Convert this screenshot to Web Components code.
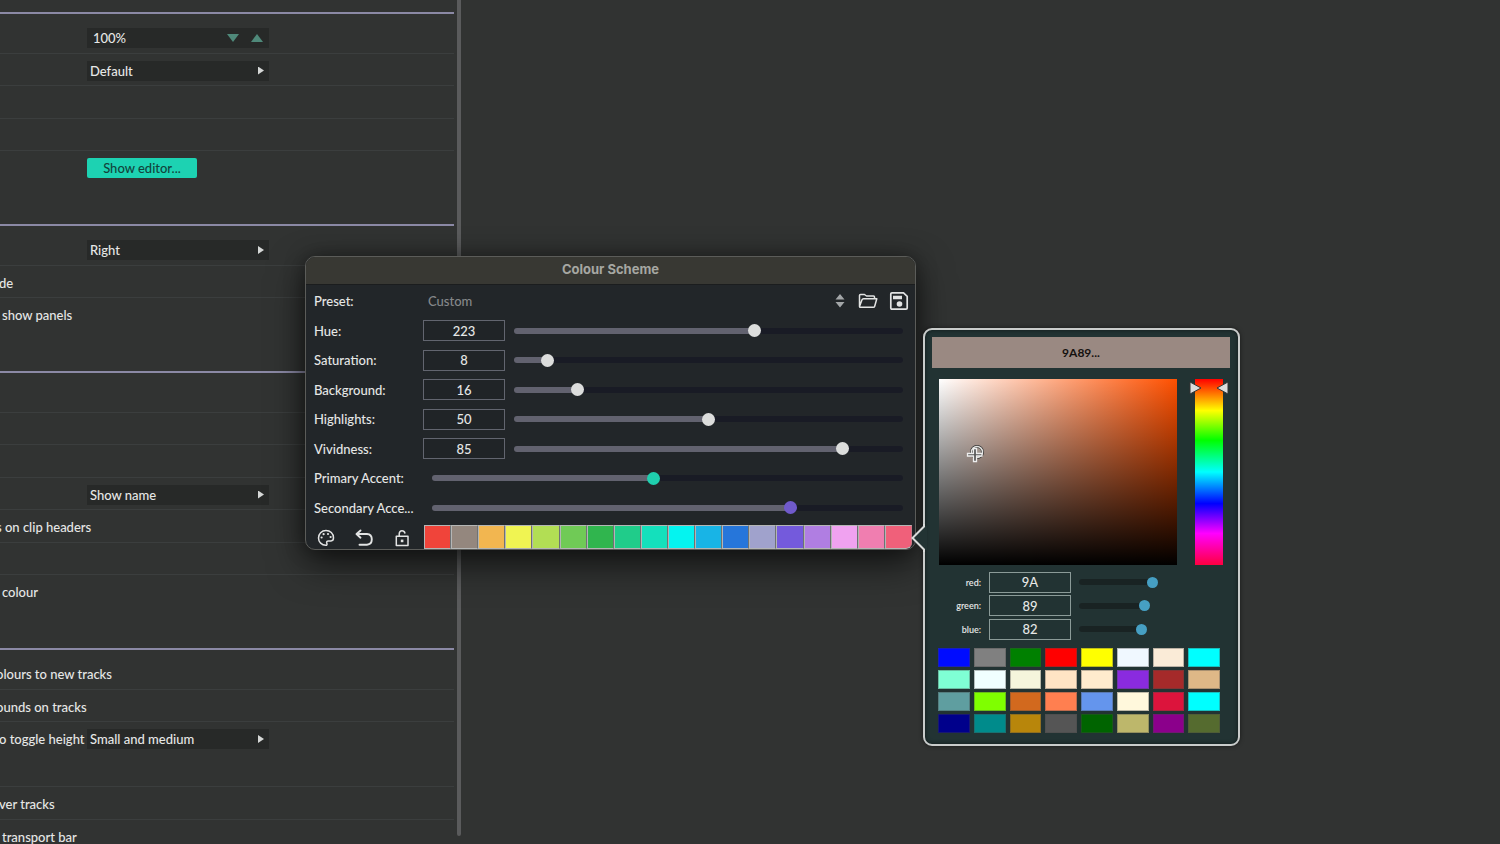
<!DOCTYPE html>
<html lang="en">
<head>
<meta charset="utf-8">
<meta name="viewport" content="width=device-width, initial-scale=1">
<title>Colour Scheme</title>
<style>
  body {
    margin: 0;
    background: #313332;
    color: #e6e7e6;
    font-family: Lato, "Open Sans", sans-serif;
    font-size: 13px;
    font-weight: 500;
  }
</style>
</head>
<body>
<daw-workspace>
  <settings-panel>
    <settings-section>
      <settings-row kind="stepper" value="100%" name="Zoom"></settings-row>
      <settings-row kind="select" value="Default" name="Font"></settings-row>
      <settings-row></settings-row>
      <settings-row></settings-row>
      <settings-row kind="button" value="Show editor..." plain></settings-row>
      <settings-row plain></settings-row>
    </settings-section>
    <settings-section>
      <settings-row kind="select" value="Right" name="Side"></settings-row>
      <settings-row cut label="de"></settings-row>
      <settings-row label="show panels" plain></settings-row>
      <settings-row plain></settings-row>
    </settings-section>
    <settings-section>
      <settings-row></settings-row>
      <settings-row></settings-row>
      <settings-row></settings-row>
      <settings-row kind="select" value="Show name" name="Clip header"></settings-row>
      <settings-row cut="deep" label="s on clip headers"></settings-row>
      <settings-row></settings-row>
      <settings-row label="colour" plain></settings-row>
      <settings-row plain></settings-row>
    </settings-section>
    <settings-section>
      <settings-row cut="deep" label="olours to new tracks"></settings-row>
      <settings-row cut="deep" label="ounds on tracks"></settings-row>
      <settings-row cut label="o toggle height" kind="select" value="Small and medium" plain></settings-row>
      <settings-row></settings-row>
      <settings-row cut label="ver tracks"></settings-row>
      <settings-row label="transport bar" plain></settings-row>
    </settings-section>
  </settings-panel>

  <tool-window slot="window" heading="Colour Scheme">
    <preset-row></preset-row>
    <slider-row label="Hue:" value="223" max="360"></slider-row>
    <slider-row label="Saturation:" value="8" max="100"></slider-row>
    <slider-row label="Background:" value="16" max="100"></slider-row>
    <slider-row label="Highlights:" value="50" max="100"></slider-row>
    <slider-row label="Vividness:" value="85" max="100"></slider-row>
    <slider-row label="Primary Accent:" value="94" max="200" accent="#1fcfae"></slider-row>
    <slider-row label="Secondary Acce..." value="153" max="200" accent="#705acb"></slider-row>
    <palette-bar slot="footer"></palette-bar>
  </tool-window>

  <colour-picker slot="popover"></colour-picker>
</daw-workspace>

<script>
function template(html) {
  const t = document.createElement('template');
  t.innerHTML = html;
  return t;
}

class BaseElement extends HTMLElement {
  constructor() {
    super();
    this.attachShadow({mode: 'open'});
  }
  render(html) {
    this.shadowRoot.appendChild(template(html).content.cloneNode(true));
  }
}

class DawWorkspace extends BaseElement {
  connectedCallback() {
    this.render(`
      <style>
        :host { display: flex; position: relative; height: 100vh; overflow: hidden; }
        .scroll { width: 4px; margin: 0 0 8px 3px; background: #5a5b5c; border-radius: 0 0 2px 2px; }
        ::slotted(tool-window) { position: absolute; left: 305px; top: 256px; }
        ::slotted(colour-picker) { position: absolute; left: 923px; top: 328px; }
      </style>
      <slot></slot>
      <div class="scroll"></div>
      <slot name="window"></slot>
      <slot name="popover"></slot>
    `);
  }
}

class SettingsPanel extends BaseElement {
  connectedCallback() {
    this.render(`
      <style>
        :host { display: block; width: 454px; padding-top: 12px; overflow: hidden; }
      </style>
      <slot></slot>
    `);
  }
}

class SettingsSection extends BaseElement {
  connectedCallback() {
    this.render(`
      <style>
        :host { display: block; border-top: 2px solid #8b89a5; padding: 7px 0 8px; }
        ::slotted(:nth-child(odd)) { height: 33px; }
        ::slotted(:nth-child(even)) { height: 32px; }
      </style>
      <slot></slot>
    `);
  }
}

class SettingsRow extends BaseElement {
  connectedCallback() {
    const label = this.getAttribute('label') || '';
    const value = this.getAttribute('value');
    const name = this.getAttribute('name');
    const aria = name ? `aria-label="${name}"` : '';
    const controls = {
      select: `<span class="box"><select id="control" ${aria}><option>${value}</option></select><i class="arrow"></i></span>`,
      stepper: `<span class="box step"><input id="control" ${aria} value="${value}">
        <button aria-label="Decrease"><svg width="12" height="8"><path d="M0 0h12l-6 8z"/></svg></button>
        <button aria-label="Increase"><svg width="12" height="8"><path d="M0 8h12l-6-8z"/></svg></button></span>`,
      button: `<button class="action" id="control">${value}</button>`
    };
    const kind = this.getAttribute('kind');
    this.render(`
      <style>
        :host {
          display: grid;
          grid-template-columns: 85px 182px;
          align-items: center;
          box-sizing: border-box;
          padding: 2px 0 0 2px;
          border-bottom: 1px solid #3b3e3e;
        }
        :host([plain]) { border-color: transparent; }
        :host([cut]) { --shift: -3px; }
        :host([cut=deep]) { --shift: -6px; }
        .label, label { margin-left: var(--shift, 0); white-space: nowrap; line-height: 20px; }
        .box { display: grid; grid-template-columns: 1fr 16px; align-items: center; grid-column: 2; height: 20px; background: #272928; }
        select, input {
          appearance: none;
          width: 100%;
          height: 20px;
          margin: 0;
          padding: 0 3px;
          border: 0;
          background: none;
          color: inherit;
          font: inherit;
          outline: none;
        }
        select { grid-area: 1 / 1 / 2 / 3; }
        .arrow { grid-area: 1 / 2; width: 6px; height: 8px; background: #d6d8d7; clip-path: polygon(0 0, 100% 50%, 0 100%); pointer-events: none; margin-left: 5px; }
        .step { grid-template-columns: 1fr 12px 12px; column-gap: 12px; padding-right: 6px; box-sizing: border-box; }
        .step input { padding-left: 6px; }
        .step button { border: 0; padding: 0; background: none; display: flex; }
        .step svg { fill: #4f897a; }
        .action {
          grid-column: 2;
          justify-self: start;
          width: 110px;
          height: 20px;
          padding: 0;
          border: 0;
          border-radius: 2px;
          background: #1dd2b2;
          color: #12443c;
          font: inherit;
        }
      </style>
      ${kind === 'select' && label ? `<label for="control">${label}</label>` : `<span class="label">${label}</span>`}
      ${controls[kind] || ''}
    `);
  }
}

class ToolWindow extends BaseElement {
  connectedCallback() {
    this.render(`
      <style>
        :host {
          display: block;
          box-sizing: border-box;
          width: 611px;
          border: 1px solid #5b5c59;
          border-radius: 10px;
          overflow: hidden;
          background: #222629;
          box-shadow: 0 14px 36px rgba(0, 0, 0, .6), 0 0 20px rgba(0, 0, 0, .35);
        }
        h1 {
          margin: 0;
          height: 27px;
          border-bottom: 1px solid #1b1d1e;
          background: #383833;
          color: #a6a7a2;
          font: 700 13px/25px Inter, sans-serif;
          text-align: center;
        }
        main { padding: 1px 12px 3px 8px; }
        ::slotted(:nth-child(odd)) { height: 30px; }
        ::slotted(:nth-child(even)) { height: 29px; }
        ::slotted([slot]) { height: 24px; }
      </style>
      <h1>${this.getAttribute('heading')}</h1>
      <main><slot></slot></main>
      <slot name="footer"></slot>
    `);
  }
}

class PresetRow extends BaseElement {
  connectedCallback() {
    this.render(`
      <style>
        :host { display: grid; grid-template-columns: 109px 1fr auto auto; align-items: center; }
        .pick { display: grid; align-items: center; }
        select { grid-area: 1 / 1; appearance: none; width: 100%; height: 22px; border: 0; background: none; padding: 0 5px; color: #85888a; font: inherit; }
        .pick svg { grid-area: 1 / 1; justify-self: end; margin-right: 5px; fill: #a3a6a8; pointer-events: none; }
        button { display: flex; border: 0; padding: 0; background: none; margin-left: 8px; color: #e2e3e3; }
        button + button { margin: 0 -6px 0 11px; }
      </style>
      <label for="preset">Preset:</label>
      <span class="pick">
        <select id="preset"><option>Custom</option></select>
        <svg width="10" height="14" viewBox="0 0 10 14"><path d="M5 0l4.500 5.500h-9zM5 13.500l4.500-5.500h-9z"/></svg>
      </span>
      <button aria-label="Open preset">
        <svg width="20" height="16" viewBox="0 0 20 16" fill="none" stroke="currentColor" stroke-width="1.500" stroke-linejoin="round"><path d="M1.500 13.500V2.500Q1.500 1.500 2.500 1.500H6.500L8.500 3H15.500Q16.500 3 16.500 4V5.500M1.500 13.500L4 6.800Q4.400 5.700 5.500 5.700H18.800L16.700 13.200Q16.400 14.300 15.300 14.300H2.300Q1.500 14.300 1.500 13.500Z"/></svg>
      </button>
      <button aria-label="Save preset">
        <svg width="20" height="20" viewBox="0 0 20 20" fill="none" stroke="currentColor" stroke-width="1.700" stroke-linejoin="round"><path d="M3 1.800H14.500L18.200 5.300V17Q18.200 18.200 17 18.200H3Q1.800 18.200 1.800 17V3Q1.800 1.800 3 1.800Z"/><path d="M4 6.500H13" stroke-width="3.600"/><circle cx="10.500" cy="13" r="2.800" fill="currentColor" stroke="none"/></svg>
      </button>
    `);
  }
}

// range input drawn over a rounded bar; both share one grid cell
const rangeStyles = `
  .range { display: grid; align-items: center; }
  .bar { grid-area: 1 / 1; height: 6px; margin: 0 4px; border-radius: 3px;
    background: linear-gradient(to right, var(--fill) var(--pos), var(--track) var(--pos)); }
  .range input { grid-area: 1 / 1; appearance: none; width: 100%; height: 14px; margin: 0; background: none; }
  .range input::-webkit-slider-thumb { appearance: none; width: var(--thumb-size); height: var(--thumb-size); border: 0; border-radius: 50%; background: var(--thumb); }
  .range input::-moz-range-thumb { width: var(--thumb-size); height: var(--thumb-size); border: 0; border-radius: 50%; background: var(--thumb); }
`;

class SliderRow extends BaseElement {
  connectedCallback() {
    const label = this.getAttribute('label');
    const value = this.getAttribute('value');
    const max = this.getAttribute('max');
    const accent = this.getAttribute('accent');
    this.render(`
      <style>
        :host {
          display: grid;
          grid-template-columns: 109px ${accent ? '' : '82px '}1fr;
          align-items: center;
          --fill: #62626f;
          --track: #191b25;
          --thumb: ${accent || '#dcdddc'};
          --thumb-size: 13px;
          --pos: ${100 * value / max}%;
        }
        label { white-space: nowrap; }
        .number { box-sizing: border-box; width: 82px; height: 21px; padding: 0; border: 1px solid #62656f; background: #202427; color: inherit; font: inherit; text-align: center; }
        .range { margin: 0 -4px 0 5px; }
        ${rangeStyles}
      </style>
      <label for="value">${label}</label>
      ${accent ? '' : `<input class="number" id="value" value="${value}">`}
      <span class="range"><span class="bar"></span><input type="range" ${accent ? 'id="value"' : `aria-label="${label}"`} min="0" max="${max}" value="${value}"></span>
    `);
  }
}

class PaletteBar extends BaseElement {
  connectedCallback() {
    const colours = ['#f0443a', '#94877e', '#f2b650', '#f0f452', '#b2de54', '#70ca56', '#30b54e', '#20cc8a', '#14e0bc',
      '#04f4f0', '#18b4e6', '#2676da', '#a0a2cc', '#745adc', '#b07ee2', '#f0a2f0', '#f07eb0', '#f0607a'];
    this.render(`
      <style>
        :host { display: grid; grid-template-columns: 118px 1fr; padding-right: 3px; }
        .tools { display: flex; align-items: center; gap: 20px; padding: 2px 0 0 11px; color: #e2e3e3; }
        .tools button { display: flex; border: 0; padding: 0; background: none; color: inherit; }
        .swatches { display: flex; }
        .swatches button { flex: 1; min-width: 0; padding: 0; border: 1px solid #b4b6b5; border-right-color: #6e7274; }
        .swatches button:last-child { border-radius: 0 0 6px 0; border-right-color: #c97986; }
        svg { fill: none; stroke: currentColor; stroke-width: 1.500; stroke-linecap: round; stroke-linejoin: round; }
        .undo { stroke-width: 1.900; }
        .dots { fill: currentColor; stroke: none; }
      </style>
      <div class="tools">
        <button aria-label="Randomise"><svg width="18" height="18" viewBox="0 0 18 18"><path d="M9 1.500C4.600 1.500 1.500 4.800 1.500 8.900C1.500 13 4.800 16.300 8.800 16.300C9.800 16.300 10.300 15.500 9.900 14.600C9.200 13 9.800 11.900 11.400 11.900H14C15.600 11.900 16.500 10.600 16.500 8.800C16.500 4.600 13.200 1.500 9 1.500Z"/><g class="dots"><circle cx="4.600" cy="8.500" r="1.100"/><circle cx="6.600" cy="5.200" r="1.100"/><circle cx="11" cy="5" r="1.100"/><circle cx="13.600" cy="8" r="1.100"/></g></svg></button>
        <button aria-label="Undo"><svg class="undo" width="18" height="18" viewBox="0 0 18 18"><path d="M5.500 1.500L1.500 5L5.500 8.700M1.700 5H12Q16.800 5.300 16.800 10.300Q16.800 15.500 12 15.700H4.500"/></svg></button>
        <button aria-label="Lock"><svg width="18" height="18" viewBox="0 0 18 18"><path d="M3.300 7.300H15V16.500H3.300ZM6.200 7.300V4.800Q6.500 1.800 9 1.800Q11.300 1.800 11.900 4"/><rect class="dots" x="7.800" y="10.600" width="2.600" height="2.600"/></svg></button>
      </div>
      <div class="swatches">
        ${colours.map(c => `<button aria-label="${c}" style="background:${c}"></button>`).join('')}
      </div>
    `);
  }
}

class ColourPicker extends BaseElement {
  connectedCallback() {
    const channels = [['red', '9A'], ['green', '89'], ['blue', '82']];
    const named = ['#000cff', '#808080', '#008000', '#ff0000', '#ffff00', '#f0f8ff', '#faebd7', '#00ffff',
      '#7fffd4', '#f0ffff', '#f5f5dc', '#ffe4c4', '#ffebcd', '#8a2bdf', '#a52a2a', '#deb887',
      '#5f9ea0', '#7fff00', '#d2691e', '#ff7f50', '#6495ed', '#fff8dc', '#dc143c', '#00ffff',
      '#00008b', '#008b8b', '#b8860b', '#555555', '#006400', '#bdb76b', '#8b008b', '#556b2f'];
    this.render(`
      <style>
        :host {
          display: block;
          box-sizing: border-box;
          width: 317px;
          padding: 7px 8px 11px 7px;
          border: 2px solid #c9cccb;
          border-radius: 9px;
          background: #223333;
          box-shadow: 0 0 4px rgba(0, 0, 0, .5), inset 0 0 4px rgba(0, 0, 0, .5);
        }
        .pointer { position: absolute; left: -14px; top: 194px; }
        .current { height: 31px; background: #9a8982; color: #15110f; font-size: 12px; font-weight: 700; line-height: 31px; text-align: center; }
        .space { display: grid; grid-template-columns: 1fr 28px; column-gap: 18px; height: 186px; margin: 11px 7px 5px; }
        .field { position: relative; background: linear-gradient(to top, #000, transparent), linear-gradient(to right, #fff, #ff5000); }
        .field svg { position: absolute; left: 27px; top: 66px; }
        .hue { position: relative; background: linear-gradient(#f00, #ff0 17%, #0f0 33%, #0ff 50%, #00f 67%, #f0f 83%, #ff0040); }
        .hue svg { position: absolute; left: -6px; top: 2px; }
        .channel { display: grid; grid-template-columns: 49px 82px 127px; column-gap: 8px; align-items: center; height: 24px; }
        .channel:nth-child(even) { height: 23px; }
        .channel label { font-size: 9px; font-weight: 600; text-align: right; }
        .channel .number { box-sizing: border-box; width: 82px; height: 21px; padding: 0; border: 1px solid #8b9b98; background: none; color: inherit; font: inherit; text-align: center; }
        .range { --fill: #192323; --track: transparent; --thumb: #469fc3; --thumb-size: 11px; margin-left: -4px; }
        ${rangeStyles}
        .named { display: grid; grid-template-columns: repeat(8, 1fr); gap: 3px 4px; margin: 7px 10px 0 6px; }
        .named button { height: 19px; padding: 0; border: 1px solid rgba(70, 70, 70, .35); }
      </style>
      <svg class="pointer" width="16" height="28" viewBox="0 0 16 28"><path d="M13 2L1.500 14L13 26H16V2Z" fill="#223333"/><path d="M13 0V2.500L1.500 14L13 25.500V28" fill="none" stroke="#d9dbda" stroke-width="2"/></svg>
      <div class="current">9A89...</div>
      <div class="space">
        <div class="field">
          <svg width="20" height="20" viewBox="0 0 20 20"><circle cx="11" cy="7" r="5.500" fill="#a0968f" stroke="#333" stroke-width="3"/><circle cx="11" cy="7" r="5.500" fill="none" stroke="#e3e3e0" stroke-width="1.500"/><path d="M7.500 3.500H10.500V8.500H16V11H10.500V16.500H7.500V11H1.500V8.500H7.500Z" fill="#555" stroke="#eee" stroke-width="1.300"/></svg>
        </div>
        <div class="hue">
          <svg width="40" height="14" viewBox="0 0 40 14"><path d="M1 1L12 7L1 13ZM39 1L28 7L39 13Z" fill="#dcdcdc" stroke="#333"/></svg>
        </div>
      </div>
      <div>
        ${channels.map(([name, hex]) => `
          <div class="channel">
            <label for="${name}">${name}:</label>
            <input class="number" id="${name}" value="${hex}">
            <span class="range" style="--pos:${100 * parseInt(hex, 16) / 255}%"><span class="bar"></span><input type="range" aria-label="${name}" min="0" max="255" value="${parseInt(hex, 16)}"></span>
          </div>`).join('')}
      </div>
      <div class="named">
        ${named.map(c => `<button aria-label="${c}" style="background:${c}"></button>`).join('')}
      </div>
    `);
  }
}

window.customElements.define('daw-workspace', DawWorkspace);
window.customElements.define('settings-panel', SettingsPanel);
window.customElements.define('settings-section', SettingsSection);
window.customElements.define('settings-row', SettingsRow);
window.customElements.define('tool-window', ToolWindow);
window.customElements.define('preset-row', PresetRow);
window.customElements.define('slider-row', SliderRow);
window.customElements.define('palette-bar', PaletteBar);
window.customElements.define('colour-picker', ColourPicker);
</script>
</body>
</html>
